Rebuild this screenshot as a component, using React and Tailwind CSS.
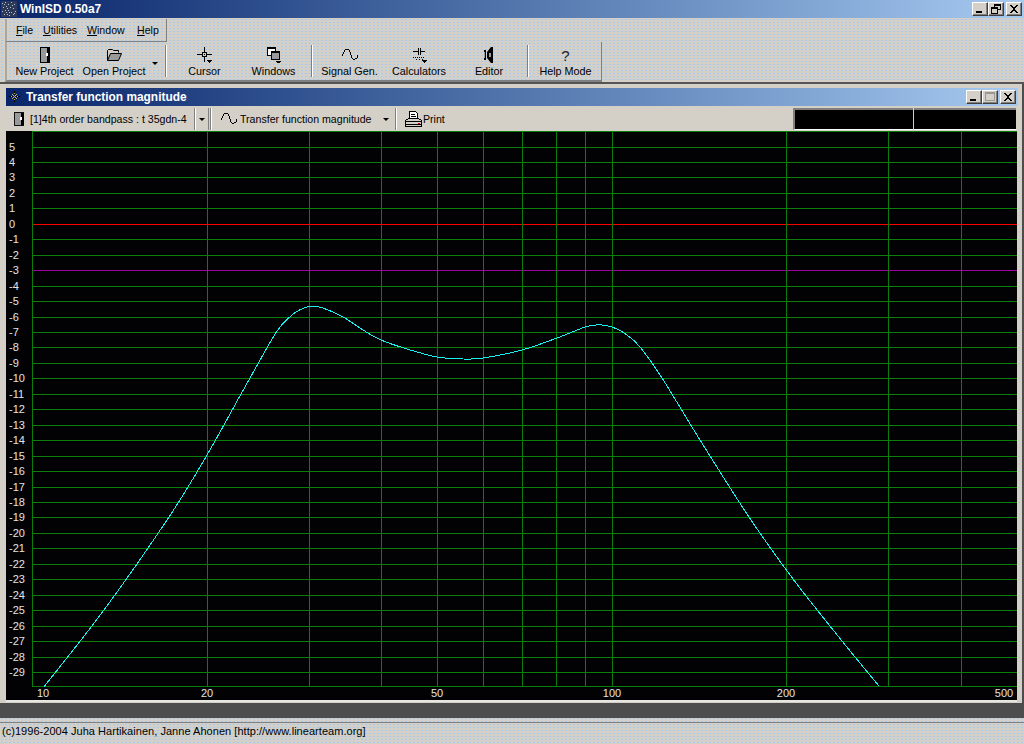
import React from "react";

const FRAME = "bg-[#d4d0c8]";
const DOTS =
  "bg-[radial-gradient(circle,#a6caf0_0.6px,transparent_0.9px)] bg-[length:4px_3px]";

const X_LINES = [32, 207, 309, 381, 437, 483, 522, 556, 585, 612, 786, 888, 961];
const X_LABELS = [
  ["10", 43],
  ["20", 207],
  ["50", 437],
  ["100", 612],
  ["200", 786],
  ["500", 1004],
];
const CURVE = [
  [44, 686.7], [104, 610], [169, 517], [207, 455], [241, 394], [259, 362],
  [272, 339], [280, 327], [288, 318.5], [296, 312], [304, 308], [312, 306],
  [323, 308], [343, 317], [363, 330], [381, 340], [407, 349], [437, 357],
  [463, 359], [483, 358], [522, 350], [557, 338], [585, 327], [596, 325],
  [606, 325.5], [617, 329], [627, 335], [640, 347], [662, 378], [700, 440],
  [749, 517], [793, 579], [842, 641], [879, 686],
];

// catmull-rom through the sampled points, so the line has no corners
const curvePath = () => {
  let d = `M${CURVE[0][0]} ${CURVE[0][1]}`;
  for (let i = 0; i < CURVE.length - 1; i++) {
    const p0 = CURVE[Math.max(i - 1, 0)];
    const p1 = CURVE[i];
    const p2 = CURVE[i + 1];
    const p3 = CURVE[Math.min(i + 2, CURVE.length - 1)];
    const c1x = p1[0] + (p2[0] - p0[0]) / 6;
    const c1y = p1[1] + (p2[1] - p0[1]) / 6;
    const c2x = p2[0] - (p3[0] - p1[0]) / 6;
    const c2y = p2[1] - (p3[1] - p1[1]) / 6;
    d += `C${c1x} ${c1y} ${c2x} ${c2y} ${p2[0]} ${p2[1]}`;
  }
  return d;
};

const gridY = (n) => Math.floor(224.3 + 15.4545 * n) + 0.5;

function TitleButton({ children, className = "" }) {
  return (
    <div
      className={`w-[16px] h-[14px] ${FRAME} border-t border-l border-t-white border-l-white border-r border-b border-r-[#404040] border-b-[#404040] shadow-[inset_-1px_-1px_0_#808080] flex items-center justify-center ${className}`}
    >
      <svg width="12" height="10" viewBox="0 0 12 10" shapeRendering="crispEdges">
        {children}
      </svg>
    </div>
  );
}

const MinGlyph = () => <rect x="2" y="7" width="6" height="2" fill="#000" />;
const RestoreGlyph = () => (
  <path
    d="M4 .5h6v5H8M4 .5v2M1.5 3.5h6v6h-6z M4 1.5h6 M1.5 4.5h6"
    fill="none"
    stroke="#000"
  />
);
const CloseGlyph = () => (
  <path
    d="M2 1h2v1h1v1h2V2h1V1h2v1H9v1H8v1H7v2h1v1h1v1h1v1H8V8H7V7H5v1H4v1H2V8h1V7h1V6h1V4H4V3H3V2H2z"
    fill="#000"
  />
);
const MaxGlyph = () => (
  <path d="M1.5 .5h9v8h-9z M1.5 1.5h9" fill="none" stroke="#9a9890" />
);

function Icon({ children, w = 16, h = 16 }) {
  return (
    <svg
      width={w}
      height={h}
      viewBox={`0 0 ${w} ${h}`}
      shapeRendering="crispEdges"
      className="shrink-0"
    >
      {children}
    </svg>
  );
}

const SmallCaret = ({ x, y }) => (
  <path d={`M${x} ${y}h5v1h-1v1h-1v1h-1v-1h-1v-1h-1z`} fill="#000" />
);

const BoxIcon = () => (
  <Icon>
    <path d="M3.5 .5h9v15h-9z" fill="#9a9a9a" stroke="#000" />
    <rect x="10" y="1" width="3" height="14" fill="#000" />
    <rect x="9" y="6" width="2" height="3" fill="#fff" />
  </Icon>
);

const FolderIcon = () => (
  <Icon>
    <path
      d="M1.5 13.5v-10l1-1h4l1 1h5v2"
      fill="#d4d0c8"
      stroke="#000"
      shapeRendering="auto"
    />
    <path
      d="M1.5 13.5l3-7h11l-3 7z"
      fill="#9a9a9a"
      stroke="#000"
      shapeRendering="auto"
    />
  </Icon>
);

const CursorIcon = () => (
  <Icon>
    <path d="M7 0h1v5H7zM7 10h1v5H7zM0 7h5v1H0zM10 7h5v1h-5z" fill="#000" />
    <path d="M5.5 5.5h4v4h-4z" fill="none" stroke="#000" />
    <rect x="7" y="7" width="1" height="1" fill="#000" />
    <SmallCaret x={10} y={13} />
  </Icon>
);

const WindowsIcon = () => (
  <Icon>
    <rect x="1.5" y=".5" width="8" height="8" fill="#fff" stroke="#000" />
    <rect x="1" y="0" width="9" height="2" fill="#000" />
    <rect x="5.5" y="4.5" width="8" height="8" fill="#9a9a9a" stroke="#000" />
    <rect x="5" y="4" width="9" height="2" fill="#000" />
    <SmallCaret x={10} y={14} />
  </Icon>
);

const SineIcon = () => (
  <Icon>
    <polyline
      points="0,9 1,7 2,5 3,3 5,2 7,3 8,5 9,8 10,11 11,12 13,12 15,11 16,8"
      fill="none"
      stroke="#000"
    />
  </Icon>
);

const CalcIcon = () => (
  <Icon>
    <path d="M2 4h5v1H2zM9 4h5v1H9zM7 1h1v7H7zM9 1h1v7H9z" fill="#000" />
    <path
      d="M2 10h1v1h1v-1h1v1h1v-1h1v1h1v-1h1v1h1v-1h1v1h1v-1h1v1H2zM5 12h1v1H5zM8 12h1v1H8zM11 12h1v1h-1z"
      fill="#000"
    />
    <SmallCaret x={11} y={13} />
  </Icon>
);

const SpeakerIcon = () => (
  <Icon>
    <rect x="3" y="3" width="2" height="10" fill="#000" />
    <rect x="3" y="5" width="1" height="6" fill="#9a9a9a" />
    <path d="M12 0v16h-2l-4-5V5l4-5z" fill="#000" shapeRendering="auto" />
    <rect x="8" y="6" width="2" height="4" fill="#9a9a9a" />
  </Icon>
);

const PrinterIcon = () => (
  <Icon w={17} h={17}>
    <path d="M4.5 .5h6l2 2v5h-8z" fill="#fff" stroke="#000" />
    <path d="M6 3h4v1H6zM6 5h5v1H6z" fill="#000" />
    <path d="M.5 9.5l3-2h10l3 2v6H.5z" fill="#d4d0c8" stroke="#000" />
    <path d="M1 10h15v1H1zM1 13h15v1H1z" fill="#000" />
    <rect x="13" y="12" width="2" height="1" fill="#e00000" />
  </Icon>
);

const AppIcon = () => (
  <Icon>
    <rect width="16" height="16" fill="#2c3a58" />
    {[
      [1, 2], [4, 1], [7, 3], [10, 1], [13, 3], [2, 6], [5, 5], [9, 6], [12, 7],
      [14, 10], [1, 10], [4, 9], [7, 9], [10, 11], [3, 13], [6, 13], [12, 13], [8, 14],
      [3, 3], [6, 7], [11, 4], [8, 11], [13, 12], [5, 11],
    ].map(([x, y]) => (
      <rect key={`${x}-${y}`} x={x} y={y} width="1" height="1" fill="#b4c0d0" />
    ))}
  </Icon>
);

const ChildIcon = () => (
  <Icon>
    <path d="M7 2h1v4H7zM7 9h1v4H7zM2 7h4v1H2zM9 7h4v1H9z" fill="#000" />
    {[
      [6, 6], [8, 6], [6, 8], [8, 8], [7, 4], [7, 10], [4, 7], [10, 7], [7, 7],
      [5, 5], [9, 5], [5, 9], [9, 9],
    ].map(([x, y]) => (
      <rect key={`${x}-${y}`} x={x} y={y} width="1" height="1" fill="#c8b468" />
    ))}
  </Icon>
);

function Sep({ className = "" }) {
  return (
    <div
      className={`w-[2px] border-l border-l-[#808080] border-r border-r-white ${className}`}
    />
  );
}

function ToolButton({ icon, label, w }) {
  return (
    <div className={`${w} flex flex-col items-center pt-[5px]`}>
      {icon}
      <span className="mt-px leading-[14px] whitespace-nowrap">{label}</span>
    </div>
  );
}

function TitleBar({ className, icon, title, children }) {
  return (
    <div
      className={`h-[18px] flex items-center bg-linear-to-r from-[#0a246a] to-[#a6caf0] text-white font-bold text-[11.9px] ${className}`}
    >
      {icon}
      <span className="whitespace-nowrap pt-px">{title}</span>
      <div className="ml-auto flex">{children}</div>
    </div>
  );
}

function Chart() {
  const hLines = [];
  for (let n = -5; n <= 29; n++) hLines.push(n);

  return (
    <svg
      width="1011"
      height="569"
      viewBox="6 131 1011 569"
      className="block bg-[#020205]"
    >
      <g shapeRendering="crispEdges" strokeWidth="1">
        <line x1="32" x2="1017" y1="131.5" y2="131.5" stroke="#0a7d0a" />
        {hLines.map((n) => (
          <line
            key={n}
            x1="32"
            x2="1017"
            y1={gridY(n)}
            y2={gridY(n)}
            stroke={n === 0 ? "#ff0000" : n === 3 ? "#a000a0" : "#0a7d0a"}
          />
        ))}
        <line x1="32" x2="1017" y1="686.5" y2="686.5" stroke="#0a7d0a" />
        {X_LINES.map((x) => (
          <line
            key={x}
            x1={x + 0.5}
            x2={x + 0.5}
            y1="131"
            y2="687"
            stroke="#0a7d0a"
          />
        ))}
        <path d={curvePath()} fill="none" stroke="#19f0f0" />
      </g>
      <g fill="#e4e4e4" fontSize="11">
        {hLines.map((n) => (
          <text key={n} x="9" y={gridY(n) + 3.5}>
            {-n}
          </text>
        ))}
        {X_LABELS.map(([t, x]) => (
          <text key={t} x={x} y="697" textAnchor="middle">
            {t}
          </text>
        ))}
      </g>
    </svg>
  );
}

export default function App() {
  return (
    <div
      className={`w-[1024px] h-[744px] overflow-hidden flex flex-col ${FRAME} ${DOTS} text-black text-[11px] font-['Liberation_Sans',sans-serif]`}
    >
      <TitleBar
        className="pl-[1px] pr-[2px]"
        icon={
          <span className="mr-[3px]">
            <AppIcon />
          </span>
        }
        title="WinISD 0.50a7"
      >
        <TitleButton><MinGlyph /></TitleButton>
        <TitleButton><RestoreGlyph /></TitleButton>
        <TitleButton className="ml-[2px]"><CloseGlyph /></TitleButton>
      </TitleBar>

      <div className="h-[24px]">
        <div className="ml-[5px] w-[162px] h-[23px] mt-px flex items-center pl-[9px] pt-[2px] text-[10.6px] border-l-2 border-l-[#a8a8a0] border-r border-r-[#808080] border-b border-b-[#808080]">
          <span className="w-[27px]"><u>F</u>ile</span>
          <span className="w-[44px]"><u>U</u>tilities</span>
          <span className="w-[50px]"><u>W</u>indow</span>
          <span><u>H</u>elp</span>
        </div>
      </div>

      <div className="h-[40px]">
        <div className="ml-[5px] w-[597px] h-[40px] flex pl-[3px] text-[10.8px] border-l-2 border-l-[#a8a8a0] border-r border-r-[#808080] border-b-2 border-b-[#808080]">
          <ToolButton w="w-[69px]" icon={<BoxIcon />} label="New Project" />
          <ToolButton w="w-[70px]" icon={<FolderIcon />} label="Open Project" />
          <div className="w-[14px] pt-[20px] pl-[3px]">
            <div className="w-0 h-0 border-x-[3px] border-x-transparent border-t-[3px] border-t-black" />
          </div>
          <Sep className="ml-[2px] mr-[3px] my-[3px]" />
          <ToolButton w="w-[69px]" icon={<CursorIcon />} label="Cursor" />
          <ToolButton w="w-[69px]" icon={<WindowsIcon />} label="Windows" />
          <Sep className="ml-[3px] mr-[2px] my-[3px]" />
          <ToolButton w="w-[69px]" icon={<SineIcon />} label="Signal Gen." />
          <ToolButton w="w-[70px]" icon={<CalcIcon />} label="Calculators" />
          <ToolButton w="w-[70px]" icon={<SpeakerIcon />} label="Editor" />
          <Sep className="ml-[3px] mr-[2px] my-[3px]" />
          <ToolButton
            w="w-[69px]"
            icon={
              <span className="h-[16px] leading-[18px] text-[15px] text-[#222]">?</span>
            }
            label="Help Mode"
          />
        </div>
      </div>

      <div className="h-[636px] bg-[#4d4d4d] border-t-2 border-t-[#555555] flex flex-col">
        <div className={`w-[1022px] h-[619px] ${FRAME} pt-[4px] pl-[6px] pr-[4px]`}>
          <TitleBar
            className="pl-[1px]"
            icon={
              <span className="mr-[3px]">
                <ChildIcon />
              </span>
            }
            title="Transfer function magnitude"
          >
            <TitleButton><MinGlyph /></TitleButton>
            <TitleButton><MaxGlyph /></TitleButton>
            <TitleButton className="ml-[2px] mr-[2px]"><CloseGlyph /></TitleButton>
          </TitleBar>

          <div className="h-[25px] flex items-center pt-[2px] pb-px text-[10.6px]">
            <div className="w-[189px] h-full flex items-center pl-[5px] border-r border-r-[#808080]">
              <span className="mr-[3px] scale-90"><BoxIcon /></span>
              <span className="whitespace-nowrap pt-[2px]">[1]4th order bandpass : t 35gdn-4</span>
            </div>
            <div className="w-[14px] h-full flex items-center justify-center border-r border-r-[#808080] border-l border-l-white">
              <div className="w-0 h-0 border-x-[3px] border-x-transparent border-t-[3px] border-t-black" />
            </div>
            <Sep className="h-full ml-[1px] mr-[9px]" />
            <SineIcon />
            <span className="ml-[3px] w-[143px] whitespace-nowrap pt-[2px]">Transfer function magnitude</span>
            <div className="w-0 h-0 border-x-[3px] border-x-transparent border-t-[3px] border-t-black" />
            <Sep className="h-full ml-[6px] mr-[8px]" />
            <PrinterIcon />
            <span className="ml-px pt-[2px]">Print</span>
            <div className="ml-auto mr-[2px] flex h-full">
              <div className="w-[120px] bg-black border-t-2 border-l-2 border-t-[#808080] border-l-[#808080] border-b border-b-white mr-px" />
              <div className="w-[102px] bg-black border-t-2 border-t-[#808080] border-b border-b-white" />
            </div>
          </div>

          <Chart />
          <div className="w-[1011px] h-[2px] bg-[#e8e6e0]" />
        </div>
      </div>

      <div className="h-[4px] shrink-0" />
      <div className="h-[22px] shrink-0 border-t border-t-[#808080] pl-[2px] pt-[1px] leading-[14px] tracking-[0.04px]">
        (c)1996-2004 Juha Hartikainen, Janne Ahonen [http://www.linearteam.org]
      </div>
    </div>
  );
}
